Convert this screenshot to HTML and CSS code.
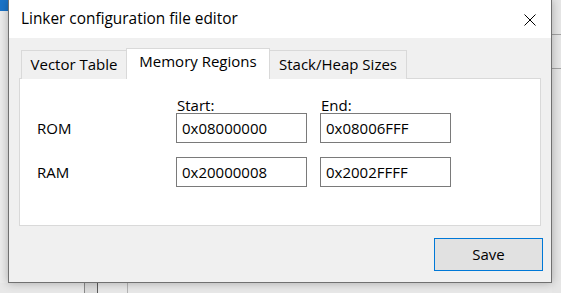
FILE: index.html
```html
<!DOCTYPE html>
<html>
<head>
<meta charset="utf-8">
<link rel="stylesheet" href="styles.css">
</head>
<body>
<div class="desktop">
  <div class="bg-accent"></div>
  <div class="bg-right">
    <div class="bg-rule r1"></div>
    <div class="bg-rule r2"></div>
  </div>
  <div class="bg-bottom">
    <div class="bg-col c1"></div>
    <div class="bg-col c2"></div>
  </div>

  <div class="window">
    <div class="titlebar">
      <span class="title">Linker configuration file editor</span>
      <svg class="close" width="12" height="12" viewBox="0 0 12 12"><path d="M0.5 0.5 L11.5 11.5 M11.5 0.5 L0.5 11.5" stroke="#000" stroke-width="1" fill="none"/></svg>
    </div>
    <div class="body">
      <div class="tabs">
        <div class="tab t1">Vector Table</div>
        <div class="tab t2 active">Memory Regions</div>
        <div class="tab t3">Stack/Heap Sizes</div>
      </div>
      <div class="panel">
        <div class="grid">
          <div></div>
          <div class="head">Start:</div>
          <div class="head">End:</div>
          <div class="label">ROM</div>
          <div class="field">0x08000000</div>
          <div class="field">0x08006FFF</div>
          <div class="label row2">RAM</div>
          <div class="field row2">0x20000008</div>
          <div class="field row2">0x2002FFFF</div>
        </div>
      </div>
      <div class="footer">
        <button class="btn">Save</button>
      </div>
    </div>
  </div>
</div>
</body>
</html>
```
FILE: styles.css
```css
* { box-sizing: border-box; }
html, body { margin: 0; padding: 0; }
body {
  width: 561px;
  height: 293px;
  overflow: hidden;
  background: #ececec;
  font-family: "Open Sans", "Noto Sans", sans-serif;
  font-size: 15px;
  color: #000;
}
.desktop { position: relative; width: 561px; height: 293px; }

.bg-accent {
  position: absolute; left: 0; top: 0; width: 9px; height: 11px;
  background: #1b74c9;
}
.bg-right {
  position: absolute; left: 552px; top: 0; width: 9px; height: 293px;
  background: #e6e6e6;
}
.bg-rule { position: absolute; left: 0; right: 0; height: 1px; background: #a3a3a3; }
.r1 { top: 34px; }
.r2 { top: 68px; }
.bg-bottom {
  position: absolute; left: 0; top: 283px; width: 552px; height: 10px;
  background: #e8e8e8;
}
.bg-col { position: absolute; top: 0; bottom: 0; }
.c1 { left: 84px; width: 14px; border-left: 1px solid #8a8a8a; border-right: 1px solid #5a5a5a; background: #dcdcdc; }
.c2 { left: 127px; width: 1px; background: #b4b4b4; }

.window {
  position: absolute;
  left: 8px; top: 0;
  width: 544px; height: 283px;
  border: 1px solid #707070;
  border-top: none;
  background: #f0f0f0;
  box-shadow: 0 0 9px rgba(0,0,0,0.28);
  display: flex;
  flex-direction: column;
}
.titlebar {
  height: 38px;
  background: #fff;
  display: flex;
  align-items: center;
  justify-content: space-between;
  padding-left: 12px;
  padding-right: 15px;
}
.title { font-size: 15.4px; line-height: 20px; padding-bottom: 1px; }
.close { display: block; margin-top: 2px; }

.body {
  flex: 1;
  display: flex;
  flex-direction: column;
  padding: 11px 10px 0 10px;
}
.tabs {
  display: flex;
  align-items: flex-end;
  padding-left: 2px;
  height: 30px;
  position: relative;
  z-index: 1;
  margin-bottom: -1px;
}
.tab {
  height: 29px;
  border: 1px solid #d9d9d9;
  border-bottom: none;
  background: #f0f0f0;
  line-height: 26px;
  text-align: center;
  white-space: nowrap;
}
.t1 { width: 105px; border-right: none; }
.t2 { width: 144px; }
.t3 { width: 137px; border-left: none; }
.tab.active {
  height: 31px;
  background: #fff;
  line-height: 24px;
}
.panel {
  height: 148px;
  background: #fff;
  border: 1px solid #d9d9d9;
  padding: 18px 0 0 17px;
}
.grid {
  display: grid;
  grid-template-columns: 126px 131px 131px;
  grid-template-rows: 16px 30px 44px;
  column-gap: 13px;
}
.head { line-height: 16px; padding-left: 1px; }
.label { align-self: center; line-height: 20px; padding-bottom: 1px; }
.field {
  height: 30px;
  border: 1px solid #7a7a7a;
  background: #fff;
  padding-left: 5px;
  line-height: 28px;
}
.row2 { margin-top: 14px; }

.footer {
  display: flex;
  justify-content: flex-end;
  padding: 12px 8px 0 0;
  margin-right: -10px;
}
.btn {
  width: 109px;
  height: 33px;
  background: #e1e1e1;
  border: 1px solid #0078d7;
  font-family: "Open Sans", "Noto Sans", sans-serif;
  font-size: 15px;
  color: #000;
  padding: 0 0 1px 0;
  margin: 0;
}
```
